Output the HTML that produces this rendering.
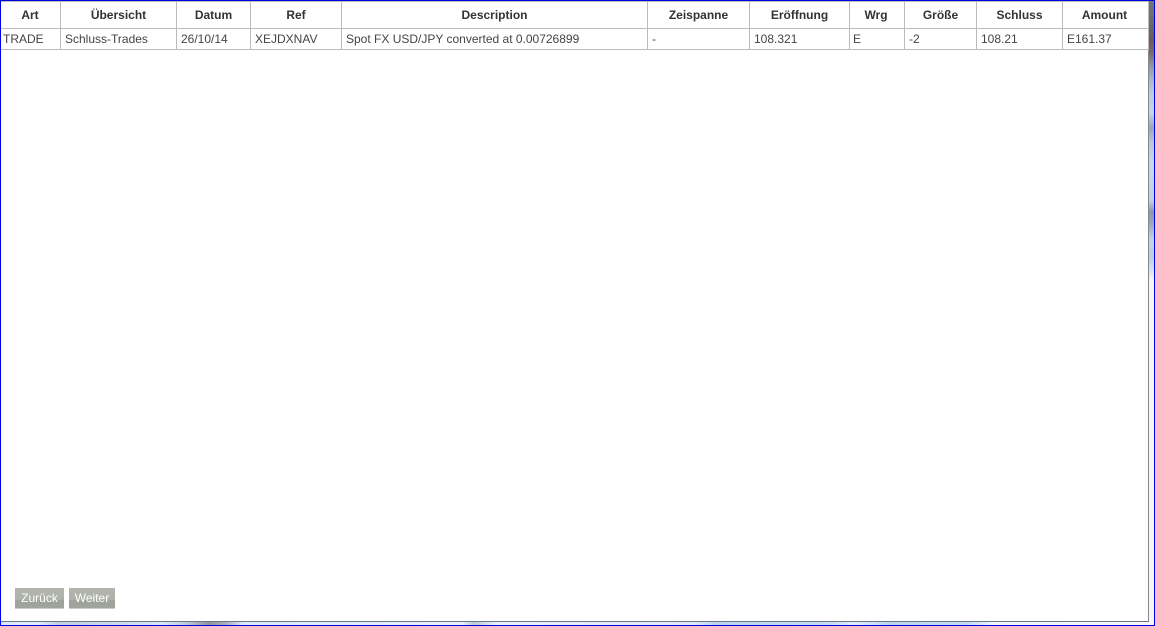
<!DOCTYPE html>
<html><head><meta charset="utf-8"><style>
html,body{margin:0;padding:0;background:#fff}
body{width:1155px;height:626px;position:relative;overflow:hidden;font-family:"Liberation Sans",Arial,sans-serif;color:#444}
.a{position:absolute}
.v{position:absolute;top:1px;height:49px;width:1px;background:#bbb}
.h{position:absolute;left:1px;width:1148px;height:1px;background:#bbb}
.th,.td{position:absolute;font-size:12px;white-space:nowrap;line-height:14px}
.th{top:8px;font-weight:bold;text-align:center;color:#333}
.td{top:32px}
.b{position:absolute;top:588px;height:20px;background:linear-gradient(#b2b6ad 0,#aeb2a8 58%,#9ea298 62%,#a0a49a 100%);border-bottom:1px solid #ccc;color:#fff;font-size:12px;line-height:20px;text-align:center}
</style></head><body>
<div class="a" style="left:1px;top:622px;width:1153px;height:3px;background:linear-gradient(90deg,#dbe8f6 0,#e4eefa 3%,#c3d0de 5%,#cfdbe8 11%,#d8e6f5 14%,#c0ccd8 16%,#8f959c 18%,#a8b0ba 19.5%,#dce9f7 21%,#e6f0fa 40%,#bcc8d2 41%,#e6f0fa 43%,#dfeaf6 60%,#bcd4ee 62%,#c6dbf1 72%,#e2eefa 74%,#bcd4ee 77%,#c6dbf1 84%,#f0f4f8 86%,#f6f6f6 100%)"></div>
<div class="a" style="left:1149px;top:0;width:5px;height:625px;background:linear-gradient(#70767c 0,#6c6c72 20px,#6a5a5a 40px,#76686a 52px,#8c96a0 65px,#a0aeb8 75px,#b8cce0 92px,#c4d8ec 112px,#98a8b4 128px,#b8c8d8 142px,#c6daee 165px,#c0d4e8 200px,#8c9aa8 212px,#9aaaba 224px,#c2d6ea 240px,#bcd0e4 258px,#e2edf6 275px,#f6f6f6 280px,#f6f6f6 100%)"></div>
<div class="a" style="left:1148px;top:50px;width:1px;height:572px;background:#888"></div>
<div class="a" style="left:1px;top:621px;width:1148px;height:1px;background:#6c7884"></div>
<div class="a" style="left:0;top:0;width:1155px;height:1px;background:#0000e6"></div>
<div class="a" style="left:0;top:0;width:1px;height:626px;background:#0000e6"></div>
<div class="a" style="left:1154px;top:0;width:1px;height:626px;background:#0000e6"></div>
<div class="a" style="left:0;top:625px;width:1155px;height:1px;background:#0000e6"></div>

<div class="h" style="top:1px"></div>
<div class="h" style="top:28px"></div>
<div class="h" style="top:49px"></div>
<div class="v" style="left:60px"></div>
<div class="v" style="left:176px"></div>
<div class="v" style="left:250px"></div>
<div class="v" style="left:341px"></div>
<div class="v" style="left:647px"></div>
<div class="v" style="left:749px"></div>
<div class="v" style="left:849px"></div>
<div class="v" style="left:904px"></div>
<div class="v" style="left:976px"></div>
<div class="v" style="left:1062px"></div>
<div class="v" style="left:1148px"></div>

<div class="th" style="left:0;width:60px">Art</div>
<div class="th" style="left:61px;width:115px">Übersicht</div>
<div class="th" style="left:177px;width:73px">Datum</div>
<div class="th" style="left:251px;width:90px">Ref</div>
<div class="th" style="left:342px;width:305px">Description</div>
<div class="th" style="left:648px;width:101px">Zeispanne</div>
<div class="th" style="left:750px;width:99px">Eröffnung</div>
<div class="th" style="left:849px;width:54px">Wrg</div>
<div class="th" style="left:905px;width:71px">Größe</div>
<div class="th" style="left:977px;width:85px">Schluss</div>
<div class="th" style="left:1062px;width:85px">Amount</div>

<div class="td" style="left:3px">TRADE</div>
<div class="td" style="left:65px">Schluss-Trades</div>
<div class="td" style="left:181px">26/10/14</div>
<div class="td" style="left:255px">XEJDXNAV</div>
<div class="td" style="left:346px">Spot FX USD/JPY converted at 0.00726899</div>
<div class="td" style="left:652px">-</div>
<div class="td" style="left:754px">108.321</div>
<div class="td" style="left:853px">E</div>
<div class="td" style="left:909px">-2</div>
<div class="td" style="left:981px">108.21</div>
<div class="td" style="left:1067px">E161.37</div>

<div class="b" style="left:15px;width:49px">Zurück</div>
<div class="b" style="left:69px;width:46px">Weiter</div>
</body></html>
